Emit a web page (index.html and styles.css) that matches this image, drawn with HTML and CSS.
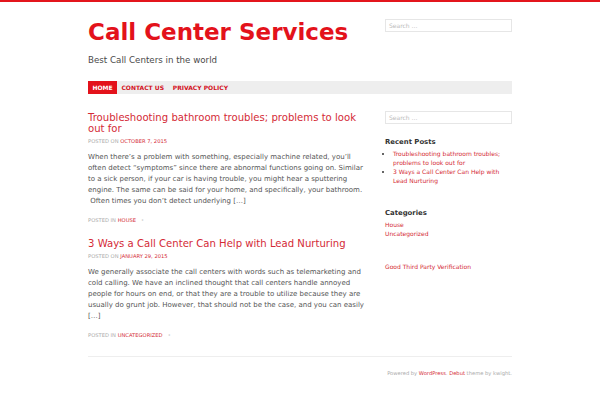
FILE: index.html
```html
<!DOCTYPE html>
<html>
<head>
<meta charset="utf-8">
<link rel="stylesheet" href="styles.css">
</head>
<body>
<div class="page">
  <header class="masthead">
    <div class="branding">
      <h1 class="site-title">Call Center Services</h1>
      <p class="tagline">Best Call Centers in the world</p>
    </div>
    <div class="search"><span>Search …</span></div>
  </header>
  <nav class="nav">
    <a class="nav-item current">HOME</a>
    <a class="nav-item">CONTACT US</a>
    <a class="nav-item">PRIVACY POLICY</a>
  </nav>
  <div class="columns">
    <main class="main">
      <article class="post">
        <h2 class="post-title">Troubleshooting bathroom troubles; problems to look out for</h2>
        <div class="meta">POSTED ON <a>OCTOBER 7, 2015</a></div>
        <p class="excerpt">When there’s a problem with something, especially machine related, you’ll often detect “symptoms” since there are abnormal functions going on. Similar to a sick person, if your car is having trouble, you might hear a sputtering engine. The same can be said for your home, and specifically, your bathroom. &nbsp;Often times you don’t detect underlying […]</p>
        <div class="meta foot">POSTED IN <a>HOUSE</a><span class="dot">•</span></div>
      </article>
      <article class="post">
        <h2 class="post-title">3 Ways a Call Center Can Help with Lead Nurturing</h2>
        <div class="meta">POSTED ON <a>JANUARY 29, 2015</a></div>
        <p class="excerpt">We generally associate the call centers with words such as telemarketing and cold calling. We have an inclined thought that call centers handle annoyed people for hours on end, or that they are a trouble to utilize because they are usually do grunt job. However, that should not be the case, and you can easily […]</p>
        <div class="meta foot">POSTED IN <a>UNCATEGORIZED</a><span class="dot">•</span></div>
      </article>
    </main>
    <aside class="sidebar">
      <div class="search"><span>Search …</span></div>
      <section class="widget recent-widget">
        <h3 class="widget-title">Recent Posts</h3>
        <ul class="recent">
          <li><a>Troubleshooting bathroom troubles; problems to look out for</a></li>
          <li><a>3 Ways a Call Center Can Help with Lead Nurturing</a></li>
        </ul>
      </section>
      <section class="widget cat-widget">
        <h3 class="widget-title">Categories</h3>
        <div class="cats"><a>House</a><a>Uncategorized</a></div>
      </section>
      <section class="widget link-widget">
        <a class="plain">Good Third Party Verification</a>
      </section>
    </aside>
  </div>
  <footer class="footer">
    <span>Powered by <a>WordPress</a>. <a>Debut</a> theme by kwight.</span>
  </footer>
</div>
</body>
</html>
```

FILE: styles.css
```css
* { box-sizing: border-box; }
body {
  margin: 0;
  border-top: 2px solid #e3151c;
  background: #fff;
  font-family: "DejaVu Sans", sans-serif;
  color: #555;
}
a { color: #d42a36; text-decoration: none; }
.page { width: 424px; margin: 0 auto; }

.masthead {
  display: flex;
  justify-content: space-between;
  align-items: flex-start;
  padding-top: 17px;
}
.site-title {
  margin: 0;
  font-size: 23px;
  line-height: 26px;
  font-weight: bold;
  color: #e3121b;
}
.tagline {
  margin: 8.5px 0 0;
  font-size: 8.7px;
  line-height: 12px;
  color: #4a4a4a;
}
.search {
  width: 127px;
  height: 13px;
  border: 1px solid #e6e6e6;
  font-size: 6px;
  line-height: 11px;
  padding-left: 3px;
  color: #bbb;
}

.nav {
  margin-top: 15.5px;
  height: 13px;
  background: #eee;
  display: flex;
}
.nav-item {
  font-size: 6px;
  font-weight: bold;
  line-height: 13px;
  padding: 0 4.4px;
  color: #d3111c;
}
.nav-item.current { background: #e3121b; color: #fff; }

.columns { display: flex; justify-content: space-between; }
.main { width: 277px; }

.post-title {
  margin: 17.5px 0 0;
  font-size: 10.1px;
  line-height: 11px;
  font-weight: normal;
  color: #d42a36;
}
.post + .post .post-title { margin-top: 14px; }
.meta {
  margin-top: 3.5px;
  font-size: 5.2px;
  line-height: 8px;
  color: #aaa;
}
.excerpt {
  margin: 7px 0 0;
  font-size: 7px;
  line-height: 11px;
  color: #555;
}
.meta.foot { margin-top: 8.5px; }
.dot { color: #ccc; margin-left: 5px; }

.sidebar { width: 127px; padding-top: 17px; }
.widget-title {
  margin: 0;
  font-size: 6.9px;
  line-height: 9px;
  font-weight: bold;
  color: #333;
}
.recent-widget { margin-top: 14px; }
.recent {
  margin: 2px 0 0;
  padding-left: 8px;
  font-size: 6px;
  line-height: 9px;
  color: #333;
}
.cat-widget { margin-top: 24px; }
.cats {
  margin-top: 2px;
  display: flex;
  flex-direction: column;
  font-size: 6px;
  line-height: 9px;
}
.link-widget { margin-top: 24px; font-size: 6px; line-height: 9px; }

.footer {
  margin-top: 17px;
  border-top: 1.5px solid #eee;
  padding-top: 12px;
  text-align: right;
  font-size: 5.2px;
  line-height: 8px;
  color: #aaa;
}
```
